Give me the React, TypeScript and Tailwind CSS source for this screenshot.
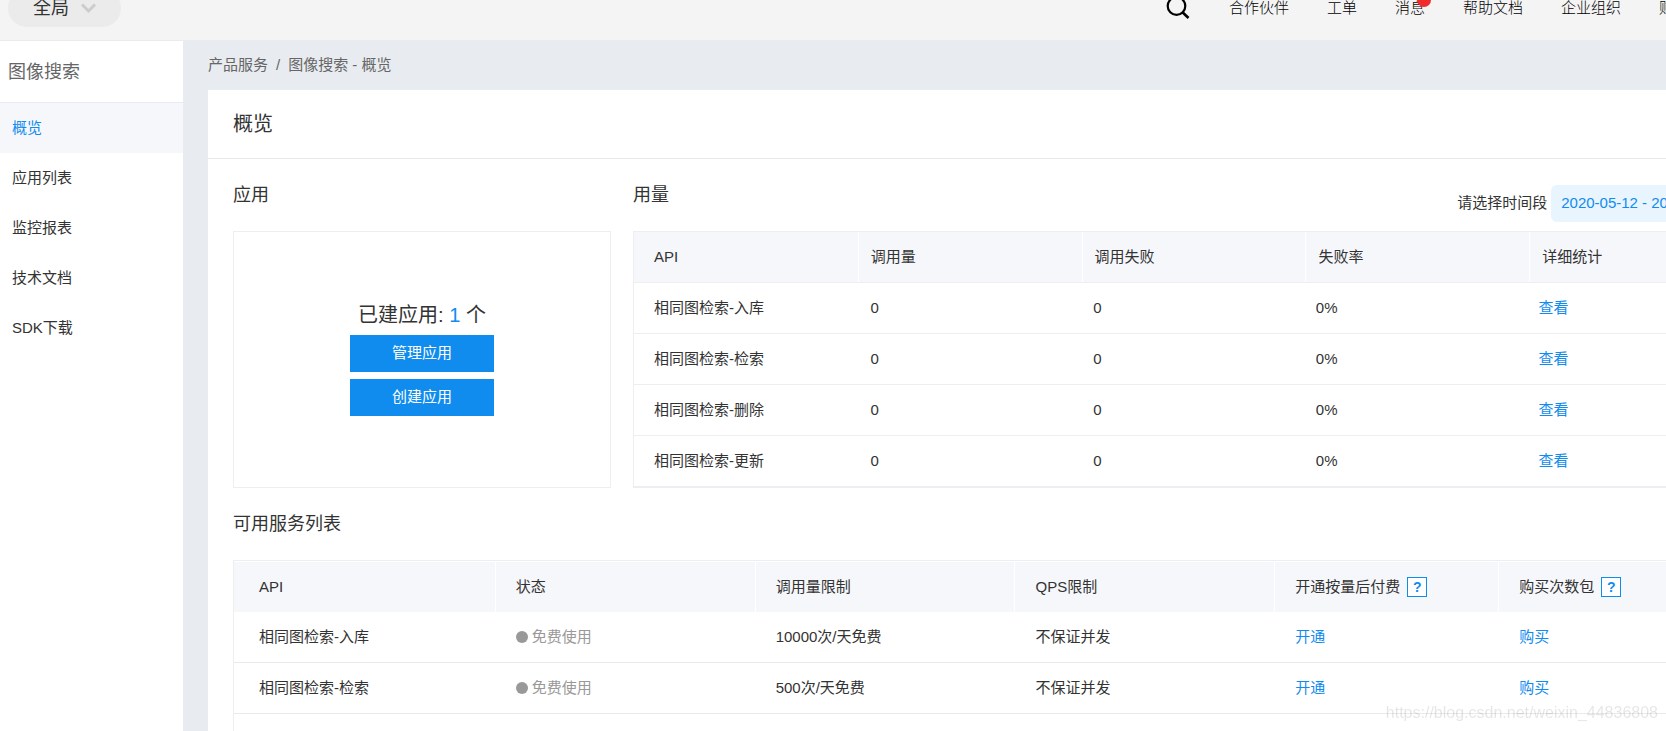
import React from "react";

const navItems = ["合作伙伴", "工单", "消息", "帮助文档", "企业组织", "财务"];

const menuItems = ["概览", "应用列表", "监控报表", "技术文档", "SDK下载"];

const usage = [
  { api: "相同图检索-入库", calls: 0, failed: 0, rate: "0%" },
  { api: "相同图检索-检索", calls: 0, failed: 0, rate: "0%" },
  { api: "相同图检索-删除", calls: 0, failed: 0, rate: "0%" },
  { api: "相同图检索-更新", calls: 0, failed: 0, rate: "0%" },
];

const services = [
  { api: "相同图检索-入库", limit: "10000次/天免费" },
  { api: "相同图检索-检索", limit: "500次/天免费" },
  { api: "相同图检索-删除", limit: "10000次/天免费" },
];

function Header() {
  return (
    <header className="-mt-6 h-16 bg-[#f4f4f4] flex items-center pl-2 pr-[90px]">
      <button className="h-[38px] rounded-full bg-[#ebebeb] px-[25px] flex items-center gap-3 text-lg text-[#333]">
        全局
        <svg width="15" height="10" viewBox="0 0 15 10" fill="none" stroke="#cccccc" strokeWidth="3">
          <path d="M1 1.5l6.5 6.5L14 1.5" />
        </svg>
      </button>
      <nav className="ml-auto flex items-center gap-[38px] font-light text-black">
        <button aria-label="搜索" className="mr-px">
          <svg width="24" height="24" viewBox="0 0 24 24" fill="none" stroke="#000" strokeWidth="2.2">
            <circle cx="10.5" cy="10" r="8.8" />
            <path d="M16.5 16.2l6 5.8" strokeWidth="2.6" />
          </svg>
        </button>
        {navItems.map((item) => (
          <a key={item} href="#" className="relative whitespace-nowrap">
            {item}
            {item === "消息" && (
              <span className="absolute -right-1.5 -top-1 size-3.5 rounded-full bg-[#f02d2d]" />
            )}
          </a>
        ))}
      </nav>
    </header>
  );
}

function Sidebar() {
  return (
    <aside className="w-[183px] shrink-0 bg-white border-t border-[#e8ecf0]">
      <h2 className="h-[62px] pl-2 flex items-center text-lg text-[#666] border-b border-[#e8ecf0]">图像搜索</h2>
      <ul>
        {menuItems.map((item, i) => (
          <li key={item}>
            <a
              href="#"
              className={`h-[50px] pl-3 flex items-center ${i === 0 ? "bg-[#f6f7fb] text-[#108cee]" : ""}`}
            >
              {item}
            </a>
          </li>
        ))}
      </ul>
    </aside>
  );
}

function Help() {
  return (
    <button
      aria-label="帮助"
      className="ml-[7px] size-5 border border-[#108cee] bg-white text-[#108cee] text-sm font-bold flex items-center justify-center"
    >
      ?
    </button>
  );
}

function UsageTable() {
  return (
    <table className="block border border-[#eeeef2]">
      <thead className="block bg-[#f6f7fb] border-b border-[#eeeef2]">
        <tr className="grid grid-cols-5 h-[50px]">
          {["API", "调用量", "调用失败", "失败率", "详细统计"].map((h, i) => (
            <th
              key={h}
              className={`flex items-center text-left font-normal ${i === 0 ? "pl-5" : "pl-3 border-l border-white"}`}
            >
              {h}
            </th>
          ))}
        </tr>
      </thead>
      <tbody className="block">
        {usage.map((row) => (
          <tr key={row.api} className="grid grid-cols-5 h-[51px] pr-1.5 border-b border-[#eeeef2]">
            <td className="flex items-center pl-5">{row.api}</td>
            <td className="flex items-center pl-3.5">{row.calls}</td>
            <td className="flex items-center pl-3.5">{row.failed}</td>
            <td className="flex items-center pl-3.5">{row.rate}</td>
            <td className="flex items-center pl-3.5">
              <a href="#" className="text-[#108cee]">查看</a>
            </td>
          </tr>
        ))}
      </tbody>
    </table>
  );
}

function ServiceTable() {
  const cols = "grid grid-cols-[261fr_260fr_260fr_260fr_224fr_255fr]";
  return (
    <table className="block border border-[#eeeef0] pt-px">
      <thead className="block bg-[#f6f7fb]">
        <tr className={`${cols} h-[50px]`}>
          <th className="flex items-center font-normal pl-[25px]">API</th>
          <th className="flex items-center font-normal pl-5 border-l border-white">状态</th>
          <th className="flex items-center font-normal pl-5 border-l border-white">调用量限制</th>
          <th className="flex items-center font-normal pl-5 border-l border-white">QPS限制</th>
          <th className="flex items-center font-normal pl-5 border-l border-white">
            开通按量后付费
            <Help />
          </th>
          <th className="flex items-center font-normal pl-5 border-l border-white">
            购买次数包
            <Help />
          </th>
        </tr>
      </thead>
      <tbody className="block">
        {services.map((row) => (
          <tr key={row.api} className={`${cols} h-[51px] border-b border-[#e8eaf0]`}>
            <td className="flex items-center pl-[25px]">{row.api}</td>
            <td className="flex items-center pl-[21px] gap-1 text-[#999]">
              <span className="size-3 rounded-full bg-[#999]" />
              免费使用
            </td>
            <td className="flex items-center pl-[21px]">{row.limit}</td>
            <td className="flex items-center pl-[21px]">不保证并发</td>
            <td className="flex items-center pl-[21px]">
              <a href="#" className="text-[#108cee]">开通</a>
            </td>
            <td className="flex items-center pl-[21px]">
              <a href="#" className="text-[#108cee]">购买</a>
            </td>
          </tr>
        ))}
      </tbody>
    </table>
  );
}

export default function App() {
  return (
    <div className="h-screen overflow-hidden bg-[#e8ecf0] font-['Liberation_Sans','Noto_Sans_CJK_SC',sans-serif] text-[15px] text-[#333]">
      <div className="min-w-[1779px] min-h-full flex flex-col">
        <Header />
        <div className="flex flex-1">
          <Sidebar />
          <main className="flex-1 pl-[25px]">
            <div className="h-[50px] flex items-center gap-2 text-[#666]">
              <a href="#">产品服务</a>
              <span>/</span>
              <span>图像搜索 - 概览</span>
            </div>

            <div className="bg-white">
              <h1 className="h-[69px] pl-[25px] flex items-center text-xl border-b border-[#e8e8e8]">概览</h1>

              <div className="px-[25px]">
                <div className="flex gap-[22px]">
                  <section className="w-[378px] shrink-0 flex flex-col">
                    <h2 className="h-[72px] flex items-center text-lg">应用</h2>
                    <div className="flex-1 border border-[#eeeeee] pb-1.5 flex flex-col items-center justify-center">
                      <p className="text-xl leading-9">
                        已建应用: <span className="text-[#108cee]">1</span> 个
                      </p>
                      <button className="w-36 h-[37px] mt-0.5 bg-[#108cee] text-white">管理应用</button>
                      <button className="w-36 h-[37px] mt-[7px] bg-[#108cee] text-white">创建应用</button>
                    </div>
                  </section>

                  <section className="flex-1">
                    <div className="h-[72px] flex items-center justify-between">
                      <h2 className="text-lg">用量</h2>
                      <div className="flex items-center gap-1 mt-4">
                        <label htmlFor="range">请选择时间段</label>
                        <button id="range" className="h-[37px] pl-2.5 pr-[26px] rounded-md bg-[#e8f4fe] text-[#108cee]">
                          2020-05-12 - 2020-05-19
                        </button>
                      </div>
                    </div>
                    <UsageTable />
                  </section>
                </div>

                <section>
                  <h2 className="h-[72px] flex items-center text-lg">可用服务列表</h2>
                  <ServiceTable />
                </section>
              </div>
            </div>
          </main>
        </div>
      </div>

      <p className="fixed right-2 bottom-1.5 text-base text-black/10">https://blog.csdn.net/weixin_44836808</p>
    </div>
  );
}
